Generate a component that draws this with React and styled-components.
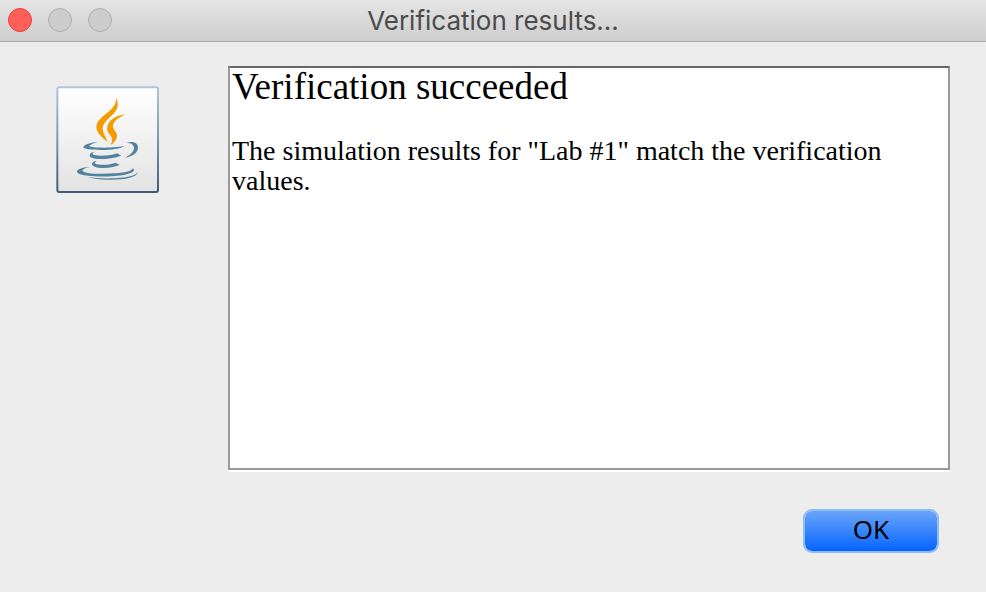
import React from "react";
import styled, { createGlobalStyle } from "styled-components";

const GlobalStyle = createGlobalStyle`
  *, *::before, *::after { box-sizing: border-box; }
  body { margin: 0; background: #ededed; }
`;

const Dialog = styled.main`
  display: flex;
  flex-direction: column;
  min-height: 100vh;
  background: #ededed;
  color: #000;
`;

const TitleBar = styled.header`
  display: grid;
  grid-template-columns: 1fr auto 1fr;
  align-items: center;
  height: 42px;
  padding: 0 8px 2px;
  background: linear-gradient(#e5e5e5, #cecece);
  border-bottom: 1px solid #a9a9a9;
`;

const WindowControls = styled.div`
  display: flex;
  gap: 16px;
`;

const WindowButton = styled.button`
  width: 24px;
  height: 24px;
  padding: 0;
  border: 1px solid ${({ $active }) => ($active ? "#e2463f" : "#adadad")};
  border-radius: 50%;
  background: ${({ $active }) => ($active ? "#ff5f57" : "#cdcdcd")};
`;

const Title = styled.h1`
  margin: 0;
  padding-top: 2px;
  color: #4b4b4b;
  font: 400 26px/32px Inter, sans-serif;
`;

const Content = styled.div`
  display: flex;
  flex: 1;
  align-items: flex-start;
  gap: 69px;
  padding: 24px 36px 39px 56px;
`;

const AppIcon = styled.svg`
  flex: none;
  width: 103px;
  height: 107px;
  margin-top: 20px;
`;

const Main = styled.div`
  display: flex;
  flex: 1;
  flex-direction: column;
  align-self: stretch;
  gap: 39px;
`;

const Message = styled.section`
  flex: 1;
  padding: 0 2px;
  border: 2px solid #999;
  border-top-color: #666;
  background: #fff;
  box-shadow: 0 2px 0 #fff;
  font-family: "Liberation Serif", serif;
`;

const Heading = styled.h2`
  margin: 0 0 30px;
  font-size: 37px;
  font-weight: 400;
  line-height: 38px;
`;

const Text = styled.p`
  margin: 0;
  font-size: 28px;
  line-height: 30px;
`;

const Actions = styled.footer`
  display: flex;
  justify-content: flex-end;
  padding-right: 11px;
`;

const DefaultButton = styled.button`
  width: 136px;
  height: 44px;
  padding: 0 0 4px;
  border: 2px solid #8dbdf1;
  border-radius: 9px;
  background: linear-gradient(#6ba4fb, #0565ff) padding-box;
  color: #000;
  font: 400 26px/36px "Noto Sans", sans-serif;
`;

function JavaIcon() {
  return (
    <AppIcon viewBox="18 18 309 321" role="img" aria-label="Java">
      <defs>
        <linearGradient id="tile" x1="0" y1="0" x2="0" y2="1">
          <stop offset="0" stopColor="#ffffff" />
          <stop offset="1" stopColor="#e3e3e3" />
        </linearGradient>
        <linearGradient id="frame" x1="0" y1="0" x2="0" y2="1">
          <stop offset="0" stopColor="#b2c4da" />
          <stop offset="0.5" stopColor="#8096ae" />
          <stop offset="1" stopColor="#3f5b78" />
        </linearGradient>
      </defs>
      <rect x="22" y="22" width="302" height="314" rx="6" fill="url(#tile)" stroke="url(#frame)" strokeWidth="6" />
      <g fill="#f49b00">
        <path d="M198 53C207 72 205 86 189 103C169 122 158 132 158 145C158 159 167 170 173 187C155 171 139 157 139 141C139 117 170 104 187 84C196 73 199 65 198 53Z" />
        <path d="M227 103C207 112 190 123 189 137C188 149 201 155 201 167C201 180 190 189 182 195C187 184 188 175 181 166C174 158 170 152 172 141C175 120 197 107 227 103Z" />
      </g>
      <g fill="#5382a1">
        <path d="M145 186C130 190 118 195 118 198C126 205 190 204 222 198C214 206 185 210 153 210C123 210 100 207 100 202C101 194 121 187 145 186Z" />
        <path d="M229 189C248 181 264 188 264 202C264 220 246 230 224 234C242 225 253 214 252 202C250 192 241 188 229 189Z" />
        <path d="M133 216C122 222 127 227 153 227C174 227 190 224 202 220L213 227C195 234 173 237 151 237C127 237 118 232 119 225C120 219 126 217 133 216Z" />
        <path d="M140 243C130 249 134 253 153 254C171 255 185 252 197 248L209 255C192 262 172 265 153 264C135 263 126 257 126 252C127 247 132 244 140 243Z" />
        <path d="M119 261C105 264 96 269 98 273C104 282 155 283 194 280C231 277 249 272 248 264C258 272 249 279 224 284C191 291 116 292 91 283C80 279 77 273 87 268C96 263 107 261 119 261Z" />
        <path d="M264 276C261 292 226 299 184 299C157 300 132 297 114 292C160 297 213 296 240 289C253 286 260 281 264 276Z" />
      </g>
    </AppIcon>
  );
}

export default function App() {
  return (
    <>
      <GlobalStyle />
      <Dialog>
        <TitleBar>
          <WindowControls>
            <WindowButton type="button" aria-label="Close" $active />
            <WindowButton type="button" aria-label="Minimize" disabled />
            <WindowButton type="button" aria-label="Zoom" disabled />
          </WindowControls>
          <Title>Verification results...</Title>
        </TitleBar>
        <Content>
          <JavaIcon />
          <Main>
            <Message>
              <Heading>Verification succeeded</Heading>
              <Text>The simulation results for "Lab #1" match the verification values.</Text>
            </Message>
            <Actions>
              <DefaultButton type="button">OK</DefaultButton>
            </Actions>
          </Main>
        </Content>
      </Dialog>
    </>
  );
}
